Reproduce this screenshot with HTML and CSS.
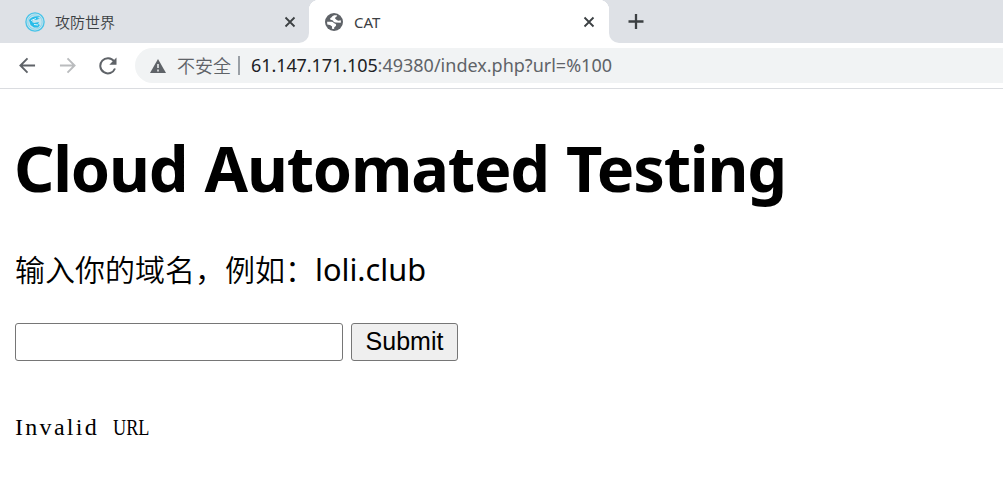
FILE: index.html
```html
<!DOCTYPE html>
<html lang="zh-CN">
<head>
<meta charset="utf-8">
<title>CAT</title>
<link rel="stylesheet" href="styles.css">
</head>
<body>
<header class="tabs">
  <div class="tab">
    <svg class="favicon site" viewBox="0 0 20 20"><circle cx="10" cy="10" r="9.1" fill="#c4e3ed" stroke="#48c3e8" stroke-width="1.3"/><circle cx="10" cy="10" r="7.2" fill="none" stroke="#7cd0ea" stroke-width=".8"/><path d="M4 8C6 5 10 3.500 15 4.500L12 6l3 .5-4 1.500H8l-1 2 2 1 5-1-1 2 2 1-2 2.500H9L5.500 13z" fill="#28bce9"/><path d="m6 8.500 5-2M9 12.500l4 .5" stroke="#e0f4fa"/></svg>
    <span class="tab-title cn">攻防世界</span>
    <svg class="close" viewBox="0 0 12 12"><path d="m1.5 1.5 9 9m0-9-9 9"/></svg>
  </div>
  <div class="tab active">
    <svg class="favicon globe" viewBox="0 0 18 18"><circle cx="9" cy="9" r="9" fill="#5f6368"/><path d="M12.200 2.400C9.500 1.800 7.800 2.400 7.200 3.600 6.700 4.700 5 4.800 5.100 6c.1 1.300 2.400.9 3 1.800.4 1.100 1.100 1.600 2.500 1.700l5.200.3c.2-1 .1-1.800-.1-2.600-1.500.7-3 .6-3.900-.2-.8-.9-1.700-.9-1.700-2 .1-1.200 1.600-1 2.100-2.600zM2.100 8.800h4.500c1.700 0 1.900 1.600 3.300 1.800 1.400.3 1.600 1.900.7 2.700l-1.300 1-.2 1.700-2.200-.3.200-2.100-2.100-1.500-2.700-.7z" fill="#fff"/></svg>
    <span class="tab-title">CAT</span>
    <svg class="close" viewBox="0 0 12 12"><path d="m1.500 1.500 9 9m0-9-9 9"/></svg>
  </div>
  <svg class="plus" viewBox="0 0 16 16"><path d="M8 .5v15M.5 8h15"/></svg>
</header>
<nav class="toolbar">
  <svg class="nav back" viewBox="0 0 18 18"><path d="M17 9H2M9 1.500 1.500 9 9 16.500"/></svg>
  <svg class="nav forward" viewBox="0 0 18 18"><path d="M1 9h15M9 1.500 16.500 9 9 16.500"/></svg>
  <svg class="nav reload" viewBox="0 0 18 18"><path d="M15 4.200A7.600 7.600 0 1 0 16 11.500"/><path class="solid" d="M17.500.5v7.200h-7.200z"/></svg>
  <div class="address">
    <svg class="warning" viewBox="0 0 16 14"><path d="M8 0 16 14H0z" fill="#5f6368"/><path d="M8 5v4m0 1.500v2" stroke="#f1f3f4" stroke-width="1.500"/></svg>
    <span class="unsafe">不安全</span><i class="divider"></i>
    <span class="url"><b>61.147.171.105</b>:49380/index.php?url=%100</span>
  </div>
</nav>
<main>
  <h1>Cloud Automated Testing</h1>
  <p class="prompt">输入你的域名，例如：<span>loli.club</span></p>
  <form class="form"><input class="domain" type="text" aria-label="域名"><button class="submit" type="button">Submit</button></form>
  <pre class="result"><span class="word">Invalid</span> <span class="acronym">URL</span></pre>
</main>
</body>
</html>
```
FILE: styles.css
```css
* { box-sizing: border-box; }
body { margin: 0; width: 1003px; height: 484px; overflow: hidden; background: #fff; color: #000; font-family: "Noto Sans", "Noto Sans CJK SC", sans-serif; }
svg { flex: none; }
.tabs { display: flex; height: 43px; background: linear-gradient(to right, #dee1e6 290px, #fff 290px, #fff 630px, #dee1e6 630px); }
.tab { display: flex; align-items: center; width: 309px; padding: 0 13px 0 25px; border-radius: 0 0 10px 0; background: #dee1e6; }
.tab.active { width: 300px; padding: 0 13px 0 16px; border-radius: 0; background: radial-gradient(circle at 10px 10px, #fff 10px, #dee1e6 10.5px) 0 0 / 10px 10px no-repeat, radial-gradient(circle at 0 10px, #fff 10px, #dee1e6 10.5px) 100% 0 / 10px 10px no-repeat, #fff; }
.favicon { width: 20px; height: 20px; }
.globe { width: 18px; height: 18px; }
.tab-title { flex: 1; margin-left: 10px; font-size: 15px; line-height: 20px; color: #3c4043; }
.cn { font-family: "Noto Sans CJK SC", sans-serif; font-weight: 350; }
.active .tab-title { margin-left: 11px; font-size: 15px; }
.close { width: 12px; height: 12px; fill: none; stroke: #3c4043; stroke-width: 1.8; }
.active .close { margin-right: 1px; }
.plus { width: 394px; height: 43px; padding: 13.5px 359px 13.5px 19px; background: #dee1e6; border-bottom-left-radius: 10px; fill: none; stroke: #3c4043; stroke-width: 2.3; }
.toolbar { display: flex; align-items: center; height: 46px; padding-left: 19px; border-bottom: 1px solid #dadce0; }
.nav { width: 17px; height: 17px; margin-right: 23px; fill: none; stroke: #5f6368; stroke-width: 2; }
.forward { stroke: #babcbe; }
.reload { width: 18px; height: 18px; margin-right: 18px; }
.solid { fill: #5f6368; stroke: none; }
.address { display: flex; flex: 1; align-items: center; height: 35px; padding-left: 15px; border-radius: 18px 0 0 18px; background: #f1f3f4; color: #5f6368; font-size: 18px; }
.warning { width: 16px; height: 14px; margin-right: 11px; }
.unsafe { width: 54px; font: 350 18px/24px "Noto Sans CJK SC", sans-serif; white-space: nowrap; padding-bottom: 2px; }
.divider { width: 2px; height: 19px; margin: 0 11px 0 7px; background: #9aa0a6; }
.url { padding-bottom: 1px; white-space: nowrap; }
.url b { font-weight: 400; color: #202124; letter-spacing: -.08px; }
main { padding: 0 15px; }
h1 { height: 90px; margin: 34px 0 0 -1px; font-size: 63px; line-height: 90px; font-weight: 700; white-space: nowrap; letter-spacing: -1.2px; word-spacing: 2px; }
.prompt { height: 40px; margin: 35px 0 0; font-size: 30px; line-height: 40px; white-space: nowrap; font-family: "Noto Sans CJK SC", sans-serif; font-weight: 350; }
.prompt span { font-family: "Noto Sans", sans-serif; font-weight: 400; font-size: 30.7px; line-height: 1; }
.form { display: flex; gap: 8px; margin: 35px 0 0; }
.domain, .submit { height: 38px; border: 1px solid #767676; border-radius: 3px; outline: 0; }
.domain { width: 328px; }
.submit { width: 107px; padding: 0 0 1px; background: #efefef; color: #000; font: 25px "Liberation Sans", sans-serif; }
.result { display: flex; height: 28px; margin: 52px 0 0; font: 24px/28px "Liberation Serif", serif; }
.word { width: 98px; letter-spacing: 2.3px; }
.acronym { transform: scaleX(.76); transform-origin: left; }
```
